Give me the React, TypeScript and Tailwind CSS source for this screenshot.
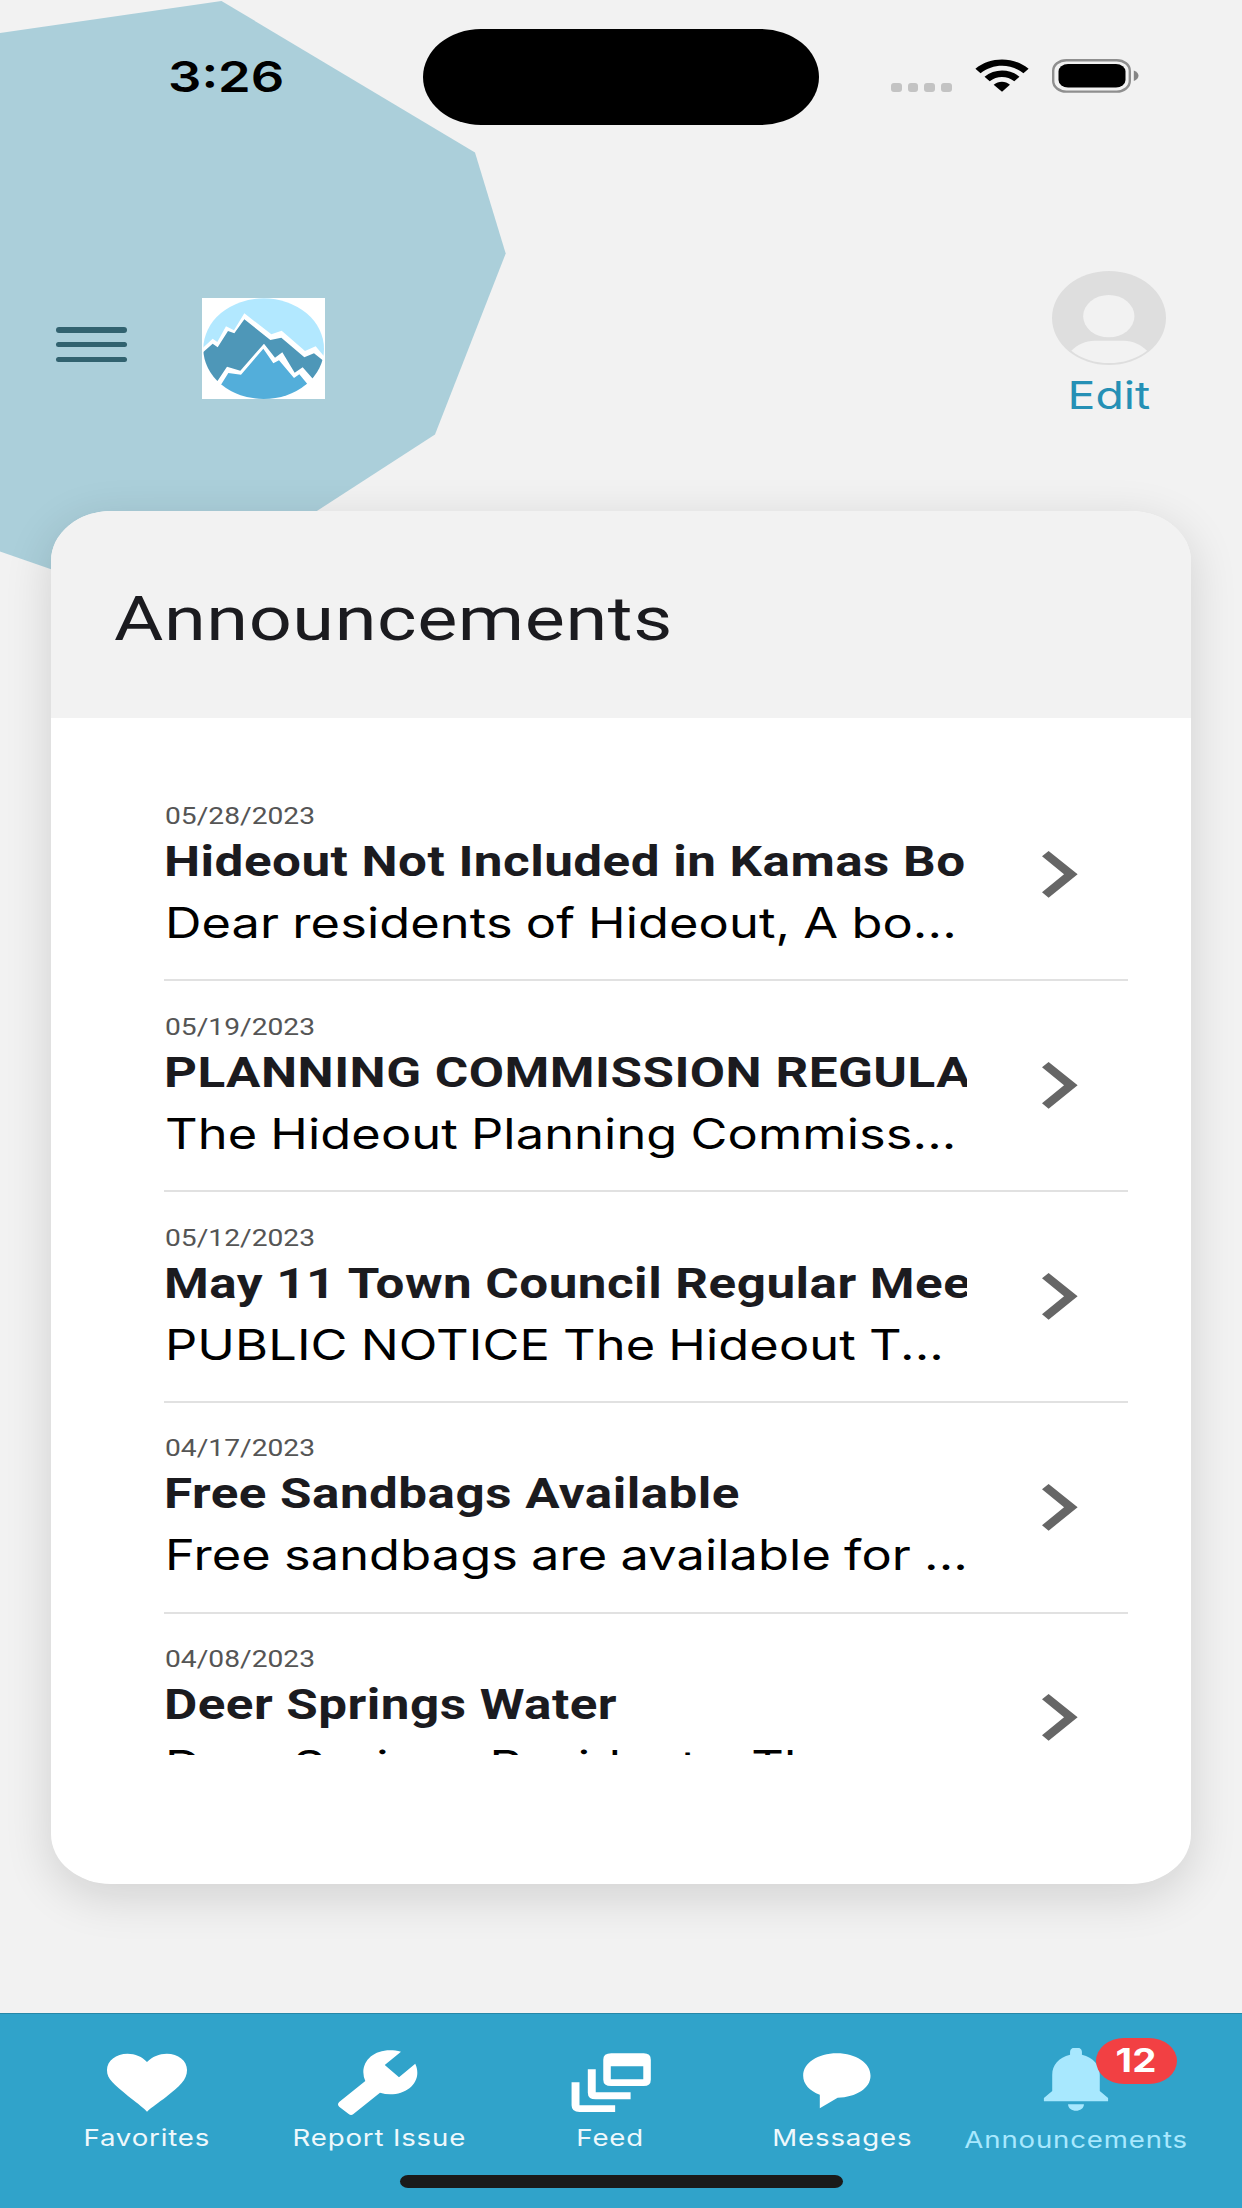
import React from "react";

type Announcement = { date: string; title: string; preview: string };

const announcements: Announcement[] = [
  { date: "05/28/2023", title: "Hideout Not Included in Kamas Bo", preview: "Dear residents of Hideout, A bo..." },
  { date: "05/19/2023", title: "PLANNING COMMISSION REGULA", preview: "The Hideout Planning Commiss..." },
  { date: "05/12/2023", title: "May 11 Town Council Regular Mee", preview: "PUBLIC NOTICE The Hideout T..." },
  { date: "04/17/2023", title: "Free Sandbags Available", preview: "Free sandbags are available for ..." },
  { date: "04/08/2023", title: "Deer Springs Water", preview: "Deer Springs Residents, The ..." },
];

function Backdrop() {
  return (
    <svg className="absolute left-0 top-0 h-[620px] w-[520px]" viewBox="0 0 520 620">
      <path d="M0 33 221.5 1 475 152.500 505.700 253.500 435 434.500 165.500 609 0 551.500Z" fill="#abcfda" />
    </svg>
  );
}

function StatusBar() {
  return (
    <div className="relative flex h-[153px] items-start">
      <div className="w-[423px] pt-[51px] pl-[168px]">
        <span className="inline-block origin-left scale-x-[1.22] text-[43px] leading-[50px] font-semibold text-black">3:26</span>
      </div>
      <div className="mt-[29px] h-[95.500px] w-[396px] rounded-[58px/48px] bg-black" />
      <div className="ml-[72px] mt-[83px] flex gap-[6px]">
        <div className="h-[9px] w-[10.700px] rounded-[3px] bg-[#c3c3c3]" />
        <div className="h-[9px] w-[10.700px] rounded-[3px] bg-[#c3c3c3]" />
        <div className="h-[9px] w-[10.700px] rounded-[3px] bg-[#c3c3c3]" />
        <div className="h-[9px] w-[10.700px] rounded-[3px] bg-[#c3c3c3]" />
      </div>
      <svg className="ml-[23.500px] mt-[59px] h-[33px] w-[54px]" viewBox="895 177 136 99" preserveAspectRatio="none">
        <path d="M896 206C934 169 992 169 1030 206L1017 220C986 190 940 190 909 220Z" />
        <path d="M919 230C944 205 982 205 1007 230L994 244C976 227 950 227 932 244Z" />
        <path d="M942 254C954 242 972 242 983 254L963 275Z" />
      </svg>
      <svg className="ml-[22px] mt-[58px] h-[36px] w-[90px]" viewBox="0 0 90 36">
        <rect x="2.200" y="2.200" width="76.600" height="31.400" rx="13" ry="10.500" fill="none" stroke="#8f8f8f" strokeWidth="2.400" />
        <rect x="7.500" y="6" width="67" height="23.500" rx="9.500" ry="7.500" />
        <path d="M82.800 12.500Q87.500 14.500 87.500 17.700T82.800 23Z" fill="#858585" />
      </svg>
    </div>
  );
}

function Logo() {
  return (
    <svg className="mt-[27px] h-[101px] w-[123px]" viewBox="66 54 369 303" preserveAspectRatio="none">
      <rect x="66" y="54" width="369" height="303" fill="#fff" />
      <clipPath id="seal"><ellipse cx="251" cy="206" rx="181" ry="151" /></clipPath>
      <g clipPath="url(#seal)">
        <path d="M60 50H440V238L407 199 375 213 305 152 274 163 193 100 162 151 138 139 112 186 98 176 60 212Z" fill="#b2e8ff" />
        <path d="M60 225 98 191 113 202 144 153 163 160 193 118 271 180 304 173 373 232 402 220 440 250 399 297 368 262 344 278 307 217 285 233 252 191 181 272 141 260 113 302 60 330Z" fill="#4e97b8" />
        <path d="M122 316 145 279 183 284 250 206 280 250 297 241 342 294 358 283 384 314V360H110Z" fill="#53aeda" />
      </g>
    </svg>
  );
}

function Header() {
  return (
    <header className="relative flex h-[357.500px] items-start pt-[118px]">
      <div className="ml-[56px] mt-[56px] flex w-[71px] flex-col gap-[9.300px]">
        <div className="h-[5.500px] rounded-full bg-[#31626f]" />
        <div className="h-[5.500px] rounded-full bg-[#31626f]" />
        <div className="h-[5.500px] rounded-full bg-[#31626f]" />
      </div>
      <div className="ml-[75px]"><Logo /></div>
      <div className="ml-auto mr-[76px] flex w-[114px] flex-col items-center">
        <svg className="h-[94px] w-[114px]" viewBox="1088 812 289 282" preserveAspectRatio="none">
          <ellipse cx="1232.500" cy="953" rx="144.500" ry="141" fill="#dedede" />
          <ellipse cx="1232" cy="947.500" rx="65" ry="63.500" fill="#f2f2f2" />
          <path d="M1137 1051C1153 1032 1173 1021 1196 1021H1270C1293 1021 1312 1032 1329 1051C1301 1076 1268 1088 1233 1088S1163 1076 1137 1051Z" fill="#f2f2f2" />
        </svg>
        <span className="mt-[7px] inline-block scale-x-[1.22] text-[38px] leading-[46px] text-[#2590b5]">Edit</span>
      </div>
    </header>
  );
}

function Row({ item }: { item: Announcement }) {
  return (
    <div className="ml-[113px] mr-[63px] flex h-[210.750px] items-center border-b-2 border-[#e1e1e1]">
      <div className="h-full w-[803px] overflow-hidden whitespace-nowrap pt-[28.670px]">
        <div className="ml-[0.500px] origin-left scale-x-[1.175] font-[Roboto] text-[24px] leading-[35px] text-[#555]">{item.date}</div>
        <div className="origin-left scale-x-[1.219] font-[Roboto] text-[42px] leading-[56px] font-bold tracking-[0.380px] text-[#1b1b1f]">{item.title}</div>
        <div className="ml-px origin-left scale-x-[1.203] text-[42px] leading-[66px] tracking-[0.080px] [word-spacing:-1px] text-black">{item.preview}</div>
      </div>
      <svg className="ml-[75px] h-[47px] w-[36px]" viewBox="1012 215 98 141" preserveAspectRatio="none">
        <path d="M1030 215 1109 285 1030 355 1012 339 1072 285 1012 231Z" fill="#666" />
      </svg>
    </div>
  );
}

const iconClass = "h-[70px] w-[84px]";

function TabLabel({ children }: { children: React.ReactNode }) {
  return <span className="ml-px mt-[5px] inline-block scale-x-[1.2] whitespace-nowrap text-[23px] leading-[30px] tracking-[0.700px]">{children}</span>;
}

function TabBar() {
  return (
    <nav className="relative h-[195.500px] border-t border-[#2688a8] bg-[#30a3ca] text-[#eef8fc]">
      <div className="grid h-[161px] grid-cols-5 pr-[53px] pl-[31px] pt-[34px]">
        <div className="flex flex-col items-center">
          <svg className={iconClass} viewBox="265 142 212 210" preserveAspectRatio="none">
            <path fill="#fff" d="M371 333C357 316 343 305 323 286C288 250 270 237 270 208C270 180 293 159 322 159C341 159 359 168 371 184C384 168 402 159 421 159C450 159 472 180 472 208C472 237 454 256 419 289C399 307 385 318 371 333Z" />
          </svg>
          <TabLabel>Favorites</TabLabel>
        </div>
        <div className="flex flex-col items-center">
          <svg className={iconClass} viewBox="848 143 212 210" preserveAspectRatio="none">
            <path fill="#fff" d="M1012 154C957 138 917 171 917 216Q917 229 922 242L856 305Q850 312 856 319L880 341Q886 347 892 341L959 277Q972 282 985 282C1032 282 1067 239 1048 190L1007 231 971 194Z" />
          </svg>
          <TabLabel>Report Issue</TabLabel>
        </div>
        <div className="flex flex-col items-center">
          <svg className={iconClass} viewBox="-9 143 212 210" preserveAspectRatio="none">
            <path fill="#fff" d="M0 246H20V315H110V335H20Q0 335 0 315ZM41 207H61V276H149V297H61Q41 297 41 277Z" />
            <path fill="#fff" fillRule="evenodd" d="M100 159H182Q200 159 200 178V238Q200 257 182 257H100Q80 257 80 238V178Q80 159 100 159ZM99 198V237H181V198Z" />
          </svg>
          <TabLabel>Feed</TabLabel>
        </div>
        <div className="flex flex-col items-center">
          <svg className={iconClass} viewBox="451 143 212 210" preserveAspectRatio="none">
            <path fill="#fff" d="M501 283C475 271 459 251 459 226C459 188 496 159 544 159S629 188 629 226S593 290 546 292L501 324Z" />
          </svg>
          <TabLabel>Messages</TabLabel>
        </div>
        <div className="relative left-[2.500px] flex flex-col items-center text-[#a8e8fe]">
          <svg className={iconClass} viewBox="1043 143 212 210" preserveAspectRatio="none">
            <path fill="currentColor" d="M1134 155C1134 136 1164 136 1164 155V163C1193 172 1209 193 1209 224V272L1230 293V303H1068V293L1089 272V224C1089 193 1105 172 1134 163ZM1129 312H1169C1169 338 1129 338 1129 312Z" />
          </svg>
          <div className="pt-[2px]"><TabLabel>Announcements</TabLabel></div>
          <div className="absolute left-[136px] top-[-10px] flex h-[46px] w-[81px] items-center justify-center rounded-[28px/23px] bg-[#f24043]">
            <span className="inline-block scale-x-[1.2] text-[32px] leading-[46px] font-bold text-white">12</span>
          </div>
        </div>
      </div>
      <div className="mx-auto h-[13px] w-[443px] rounded-[8px/6.500px] bg-[#1a1a1a]" />
    </nav>
  );
}

export default function App() {
  return (
    <div className="relative flex h-[2208px] w-[1242px] flex-col overflow-hidden bg-[#f2f2f2] font-[Inter,sans-serif]">
      <Backdrop />
      <StatusBar />
      <Header />
      <main className="relative mx-[51px] h-[1373.500px] shrink-0 overflow-hidden rounded-[60px/50px] bg-white">
        <div className="flex h-[207.500px] items-center bg-[#f2f2f2] pt-[10px] pl-[63px]">
          <h1 className="origin-left scale-x-[1.221] font-[Roboto] text-[62px] leading-[80px] tracking-[0.450px] text-[#1b1b1f]">Announcements</h1>
        </div>
        <div className="h-[1037px] overflow-hidden pt-[52.500px]">
          {announcements.map((item) => (
            <Row key={item.date} item={item} />
          ))}
        </div>
      </main>
      <div className="pointer-events-none absolute left-[51px] top-[510.500px] h-[1373.500px] w-[1140px] rounded-[60px/50px] shadow-[0_12px_48px_rgba(0,0,0,0.14)]" />
      <div className="mt-auto"><TabBar /></div>
    </div>
  );
}
